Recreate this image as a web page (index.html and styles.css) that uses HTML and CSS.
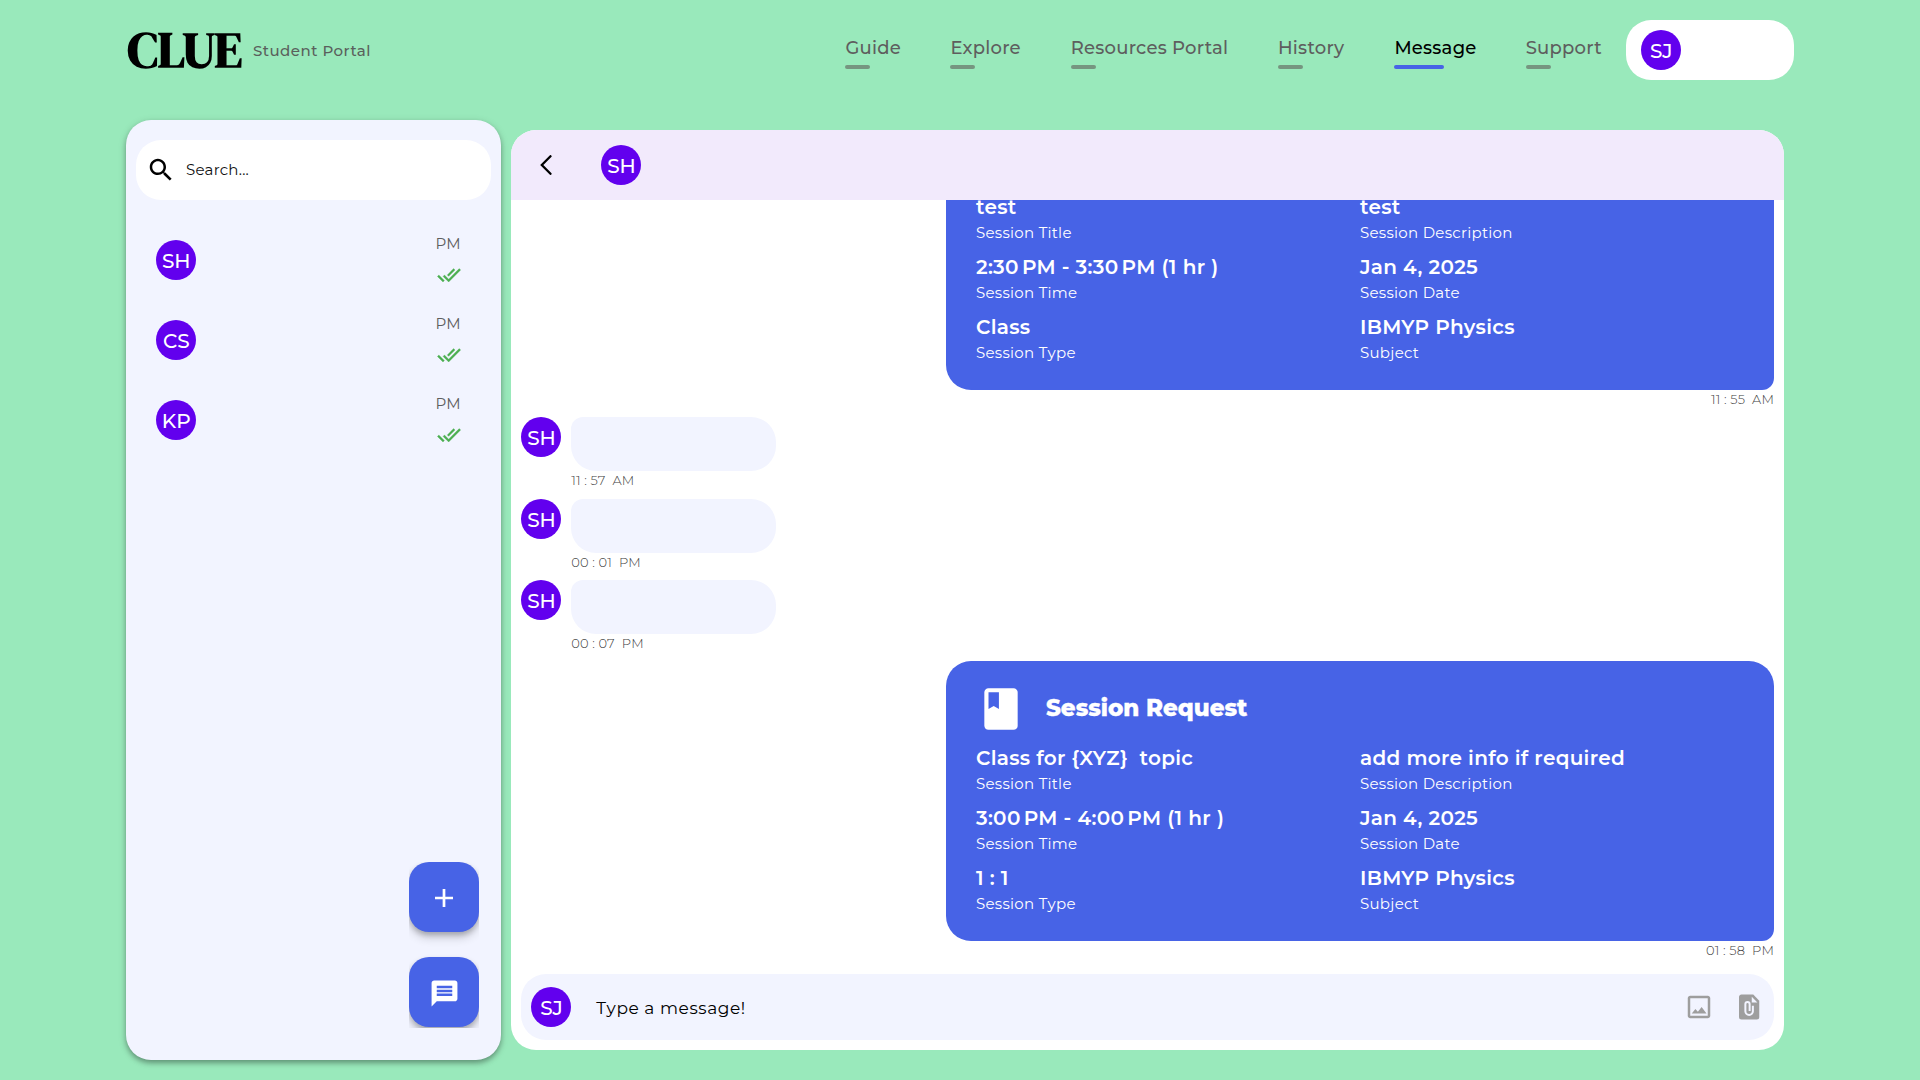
FILE: index.html
```html
<!DOCTYPE html>
<html lang="en">
<head>
<meta charset="utf-8">
<title>CLUE Student Portal</title>
<link rel="stylesheet" href="styles.css">
</head>
<body>
<svg class="sprite" aria-hidden="true">
  <symbol id="done-all" viewBox="0 0 24 24"><path d="M18 7l-1.41-1.41-6.34 6.34 1.41 1.41L18 7zm4.24-1.41L11.66 16.17 7.48 12l-1.41 1.41L11.66 19l12-12-1.42-1.41zM.41 13.41L6 19l1.41-1.41L1.83 12 .41 13.41z"/></symbol>
</svg>
<header class="topbar">
  <div class="brand">
    <span class="logo">CLUE</span>
    <span class="brand-sub">Student Portal</span>
  </div>
  <nav class="nav">
    <a class="nav-item nav-guide">Guide</a>
    <a class="nav-item nav-explore">Explore</a>
    <a class="nav-item nav-resources">Resources Portal</a>
    <a class="nav-item nav-history">History</a>
    <a class="nav-item nav-message active">Message</a>
    <a class="nav-item nav-support">Support</a>
  </nav>
  <div class="account"><span class="avatar">SJ</span></div>
</header>
<main class="layout">
  <aside class="sidebar">
    <div class="search">
      <svg class="icon30" viewBox="0 0 24 24"><path d="M15.5 14h-.79l-.28-.27C15.41 12.59 16 11.11 16 9.5 16 5.91 13.09 3 9.5 3S3 5.91 3 9.5 5.91 16 9.5 16c1.61 0 3.09-.59 4.23-1.57l.27.28v.79l5 4.99L20.49 19l-4.99-5zm-6 0C7.01 14 5 11.99 5 9.5S7.01 5 9.5 5 14 7.01 14 9.5 11.99 14 9.5 14z"/></svg>
      <span class="search-text">Search...</span>
    </div>
    <div class="contacts">
      <div class="contact"><span class="avatar">SH</span><div class="status"><span class="pm">PM</span><svg class="ticks"><use href="#done-all"/></svg></div></div>
      <div class="contact"><span class="avatar">CS</span><div class="status"><span class="pm">PM</span><svg class="ticks"><use href="#done-all"/></svg></div></div>
      <div class="contact"><span class="avatar">KP</span><div class="status"><span class="pm">PM</span><svg class="ticks"><use href="#done-all"/></svg></div></div>
    </div>
    <div class="fabs">
      <div class="fab"><svg class="plus" viewBox="0 0 18 18"><path d="M9 0v18M0 9h18" stroke="#fff" stroke-width="2.7"/></svg></div>
      <div class="fab"><svg class="chat-icon" viewBox="0 0 24 24"><path fill="#fff" d="M20 2H4c-1.1 0-2 .9-2 2v18l4-4h14c1.1 0 2-.9 2-2V4c0-1.1-.9-2-2-2zm-2 12H6v-2h12v2zm0-3H6V9h12v2zm0-3H6V6h12v2z"/></svg></div>
    </div>
  </aside>
  <section class="chat">
    <div class="chat-head">
      <svg class="back" viewBox="0 0 12 20"><path d="M10.5 1.2L1.8 10l8.7 8.8" fill="none" stroke="#000" stroke-width="2.3" stroke-linecap="round"/></svg>
      <span class="avatar">SH</span>
    </div>
    <div class="messages">
      <div class="msg mine">
        <div class="card">
          <div class="card-head"><svg class="book" viewBox="0 0 24 24"><path fill="#fff" d="M18 2H6c-1.1 0-2 .9-2 2v16c0 1.1.9 2 2 2h12c1.1 0 2-.9 2-2V4c0-1.1-.9-2-2-2zM6 4h5v8l-2.5-1.5L6 12V4z"/></svg><span class="card-title">Session Request</span></div>
          <div class="fields">
            <div class="field"><b>test</b><span>Session Title</span></div>
            <div class="field"><b>test</b><span>Session Description</span></div>
            <div class="field"><b>2:30&#8239;PM - 3:30&#8239;PM (1 hr )</b><span>Session Time</span></div>
            <div class="field"><b>Jan 4, 2025</b><span>Session Date</span></div>
            <div class="field"><b>Class</b><span>Session Type</span></div>
            <div class="field"><b>IBMYP Physics</b><span>Subject</span></div>
          </div>
        </div>
        <div class="time">11 : 55&nbsp; AM</div>
      </div>
      <div class="msg theirs"><span class="avatar">SH</span><div><div class="bubble"></div><div class="time">11 : 57&nbsp; AM</div></div></div>
      <div class="msg theirs"><span class="avatar">SH</span><div><div class="bubble"></div><div class="time">00 : 01&nbsp; PM</div></div></div>
      <div class="msg theirs"><span class="avatar">SH</span><div><div class="bubble"></div><div class="time">00 : 07&nbsp; PM</div></div></div>
      <div class="msg mine">
        <div class="card">
          <div class="card-head"><svg class="book" viewBox="0 0 24 24"><path fill="#fff" d="M18 2H6c-1.1 0-2 .9-2 2v16c0 1.1.9 2 2 2h12c1.1 0 2-.9 2-2V4c0-1.1-.9-2-2-2zM6 4h5v8l-2.5-1.5L6 12V4z"/></svg><span class="card-title">Session Request</span></div>
          <div class="fields">
            <div class="field"><b>Class for {XYZ}&nbsp; topic</b><span>Session Title</span></div>
            <div class="field"><b>add more info if required</b><span>Session Description</span></div>
            <div class="field"><b>3:00&#8239;PM - 4:00&#8239;PM (1 hr )</b><span>Session Time</span></div>
            <div class="field"><b>Jan 4, 2025</b><span>Session Date</span></div>
            <div class="field"><b>1 : 1</b><span>Session Type</span></div>
            <div class="field"><b>IBMYP Physics</b><span>Subject</span></div>
          </div>
        </div>
        <div class="time">01 : 58&nbsp; PM</div>
      </div>
    </div>
    <div class="composer">
      <span class="avatar">SJ</span>
      <span class="composer-text">Type a message!</span>
      <svg class="icon30" viewBox="0 0 24 24"><path fill="#9e9e9e" d="M19 5v14H5V5h14m0-2H5c-1.1 0-2 .9-2 2v14c0 1.1.9 2 2 2h14c1.1 0 2-.9 2-2V5c0-1.1-.9-2-2-2z"/><path fill="#9e9e9e" d="M6.2 17.2l2.9-3.7 2 2.3 3-3.9 3.9 5.3z"/></svg>
      <svg class="icon30" viewBox="0 0 24 24"><path fill="#9e9e9e" d="M6 2h9.4L20.2 7v13a2 2 0 0 1-2 2H6a2 2 0 0 1-2-2V4c0-1.1.9-2 2-2z"/><path fill="#f2f4ff" d="M14.2 3.7v4.6h4.5z"/><path d="M15.1 11v4.4a3 3 0 0 1-6 0V9.6a1.7 1.7 0 0 1 3.4 0v5.6" fill="none" stroke="#f2f4ff" stroke-width="1.6"/></svg>
    </div>
  </section>
</main>
</body>
</html>
```
FILE: styles.css
```css
* { box-sizing: border-box; }
body {
  margin: 0;
  width: 1920px;
  height: 1080px;
  overflow: hidden;
  background: #99e9bb;
  font-family: Montserrat, Inter, sans-serif;
  letter-spacing: 0.25px;
  color: #000;
}
svg { display: block; flex: none; }
.sprite { display: none; }

.topbar { display: flex; align-items: center; height: 100px; padding: 0 126px; }
.brand { display: flex; align-items: center; width: 719.4px; }
.logo {
  width: 127px;
  margin-top: -1px;
  padding-left: 1.4px;
  font: 700 50px/60px "DM Serif Display", "Liberation Serif", serif;
  letter-spacing: 0.25px;
}
.brand-sub { font-size: 15px; font-weight: 500; letter-spacing: 0.48px; color: #5a605c; }

.nav { display: flex; gap: 50px; height: 100px; padding-top: 34px; }
.nav-item { font-size: 18px; font-weight: 500; line-height: 28px; color: #5e5e5e; white-space: nowrap; }
.nav-item::after {
  content: "";
  display: block;
  width: 25px;
  height: 4px;
  margin-top: 3px;
  border-radius: 2px;
  background: #769580;
}
.nav-item.active { color: #000; }
.nav-item.active::after { width: 50px; background: #4763e6; }
.nav-guide { width: 55px; }
.nav-explore { width: 70.3px; }
.nav-resources { width: 157.3px; }
.nav-history { width: 66.4px; }
.nav-message { width: 81.3px; }
.nav-support { width: 75.4px; }

.account {
  display: flex;
  align-items: center;
  width: 168px;
  height: 60px;
  margin-left: auto;
  padding-left: 15px;
  border-radius: 25px;
  background: #fff;
}
.avatar {
  display: flex;
  flex: none;
  align-items: center;
  justify-content: center;
  width: 40px;
  height: 40px;
  padding: 2px 0 0 0.5px;
  border-radius: 50%;
  background: #6200ee;
  color: #fff;
  font-size: 20px;
  font-weight: 500;
  letter-spacing: 0;
}

.layout { display: flex; gap: 10px; padding: 20px 136px 0 126px; }
.sidebar {
  display: flex;
  flex-direction: column;
  width: 375.3px;
  height: 940px;
  padding: 20px 10px 32px;
  border-radius: 25px;
  background: #f2f4ff;
  box-shadow: 0 3px 5px rgba(0, 0, 0, 0.28), 0 2px 8px rgba(0, 0, 0, 0.14);
}
.search {
  display: flex;
  align-items: center;
  height: 60px;
  padding-left: 10px;
  border-radius: 25px;
  background: #fff;
}
.icon30 { width: 30px; height: 30px; }
.search-text { margin: -1px 0 0 10px; font-size: 15px; color: #111; }
.contacts { padding: 20px 30px 0 20px; }
.contact { display: flex; align-items: center; justify-content: space-between; height: 80px; }
.status { display: flex; flex-direction: column; align-items: flex-end; width: 60px; height: 80px; padding-top: 14px; }
.pm { margin-right: 0.4px; font-size: 15px; line-height: 20px; color: #5e5e5e; }
.ticks {
  width: 24px;
  height: 24px;
  margin: 9px 0.6px 0 0;
  fill: #4caf50;
  stroke: #4caf50;
  stroke-width: 0.3px;
}
.fabs {
  display: flex;
  flex-direction: column;
  align-self: flex-end;
  gap: 25px;
  width: 70px;
  margin: auto 12.3px 0 0;
  padding-bottom: 1px;
  overflow: hidden;
}
.fab {
  display: flex;
  align-items: center;
  justify-content: center;
  height: 70px;
  padding-top: 2px;
  border-radius: 20px;
  background: #4763e6;
  box-shadow: 0 3px 5px rgba(0, 0, 0, 0.2), 0 6px 10px rgba(0, 0, 0, 0.16);
}
.plus { width: 18px; height: 18px; }
.chat-icon { width: 31px; height: 31px; }

.chat {
  display: flex;
  flex-direction: column;
  width: 1272.7px;
  height: 920px;
  margin-top: 10px;
  border-radius: 25px;
  background: #fff;
  overflow: hidden;
}
.chat-head {
  display: flex;
  flex: none;
  align-items: center;
  height: 70px;
  padding-left: 29px;
  background: #f2eafc;
}
.back { width: 12px; height: 20px; margin-right: 49px; }
.messages {
  display: flex;
  flex: 1;
  flex-direction: column;
  justify-content: flex-end;
  min-height: 0;
  padding: 0 10px;
  overflow: hidden;
}
.msg { flex: none; margin-bottom: 8px; }
.mine { display: flex; flex-direction: column; align-items: flex-end; }
.theirs { display: flex; gap: 10px; }
.bubble { width: 205px; height: 54px; border-radius: 12px 25px 25px 25px; background: #f2f4ff; }
.time { font-size: 13px; font-weight: 300; line-height: 19.33px; letter-spacing: 0.16px; color: #404040; }

.card {
  width: 828px;
  height: 280px;
  padding: 22.5px 30px 0;
  border-radius: 25px 25px 12px 25px;
  background: #4763e6;
  color: #fff;
}
.card-head { display: flex; align-items: center; height: 50px; }
.book { width: 50px; height: 50px; }
.card-title { margin: -2px 0 0 20px; font-size: 23px; font-weight: 800; letter-spacing: 0; -webkit-text-stroke: 0.3px #fff; }
.fields { display: grid; grid-template-columns: 384px 384px; row-gap: 8px; padding-top: 9px; }
.field { display: flex; flex-direction: column; height: 52px; white-space: nowrap; }
.field b { font-size: 20px; font-weight: 600; line-height: 30px; letter-spacing: 0.31px; }
.field span { font-size: 15px; line-height: 22px; letter-spacing: 0.28px; color: #fff; }

.composer {
  display: flex;
  flex: none;
  align-items: center;
  height: 66px;
  margin: 5.33px 10px 10px;
  padding: 0 10px;
  border-radius: 25px;
  background: #f2f4ff;
}
.composer-text { margin: 1px auto 0 25px; font-size: 17px; letter-spacing: 0.57px; }
.composer .icon30 + .icon30 { margin-left: 20px; }
```
